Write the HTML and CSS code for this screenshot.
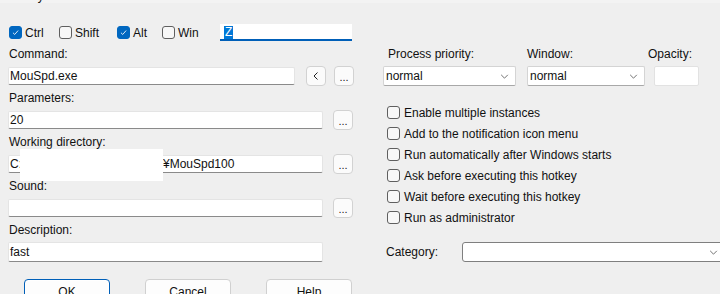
FILE: index.html
```html
<!DOCTYPE html>
<html lang="en">
<head>
    <meta charset="UTF-8">
    <meta name="viewport" content="width=device-width, initial-scale=1.0">
    <title>Hot Key</title>
    <link rel="stylesheet" href="styles.css">
</head>
<body>
    <div class="titlebar">Hot Key</div>

    <div class="dialog">
        <div class="left">
            <div class="hotkey-row">
                <label class="check"><span class="box checked"><svg viewBox="0 0 13 13"><polyline points="3.5,6.8 5.6,8.8 9.6,4.2"/></svg></span>Ctrl</label>
                <label class="check"><span class="box"></span>Shift</label>
                <label class="check"><span class="box checked"><svg viewBox="0 0 13 13"><polyline points="3.5,6.8 5.6,8.8 9.6,4.2"/></svg></span>Alt</label>
                <label class="check"><span class="box"></span>Win</label>
                <div class="hotkey-input"><span class="selected">Z</span></div>
            </div>

            <div class="field">
                <div class="label">Command:</div>
                <div class="input-row">
                    <div class="textbox short">MouSpd.exe</div>
                    <button class="btn-small">
                        <svg viewBox="0 0 10 10"><polyline points="6.5,1.5 3,5 6.5,8.5"/></svg>
                    </button>
                    <button class="btn-small dots">...</button>
                </div>
            </div>

            <div class="field">
                <div class="label">Parameters:</div>
                <div class="input-row">
                    <div class="textbox">20</div>
                    <button class="btn-small dots">...</button>
                </div>
            </div>

            <div class="field">
                <div class="label">Working directory:</div>
                <div class="input-row redacted-row">
                    <div class="textbox">C:<span class="gap-text"></span>¥MouSpd100</div>
                    <button class="btn-small dots">...</button>
                    <div class="redaction"></div>
                </div>
            </div>

            <div class="field">
                <div class="label">Sound:</div>
                <div class="input-row">
                    <div class="textbox"></div>
                    <button class="btn-small dots">...</button>
                </div>
            </div>

            <div class="field">
                <div class="label">Description:</div>
                <div class="input-row">
                    <div class="textbox tall">fast</div>
                </div>
            </div>

            <div class="buttons">
                <button class="btn default">OK</button>
                <button class="btn">Cancel</button>
                <button class="btn">Help</button>
            </div>
        </div>

        <div class="right">
            <div class="combo-labels">
                <span class="lbl-priority">Process priority:</span>
                <span class="lbl-window">Window:</span>
                <span class="lbl-opacity">Opacity:</span>
            </div>
            <div class="combo-row">
                <div class="combo priority">normal<svg viewBox="0 0 10 6"><polyline points="1,1 5,5 9,1"/></svg></div>
                <div class="combo window">normal<svg viewBox="0 0 10 6"><polyline points="1,1 5,5 9,1"/></svg></div>
                <div class="opacity-box"></div>
            </div>

            <div class="options">
                <label class="check option"><span class="box"></span>Enable multiple instances</label>
                <label class="check option"><span class="box"></span>Add to the notification icon menu</label>
                <label class="check option"><span class="box"></span>Run automatically after Windows starts</label>
                <label class="check option"><span class="box"></span>Ask before executing this hotkey</label>
                <label class="check option"><span class="box"></span>Wait before executing this hotkey</label>
                <label class="check option"><span class="box"></span>Run as administrator</label>
            </div>

            <div class="category-row">
                <span class="category-label">Category:</span>
                <div class="combo category"><svg viewBox="0 0 10 6"><polyline points="1,1 5,5 9,1"/></svg></div>
            </div>
        </div>
    </div>
</body>
</html>
```

FILE: styles.css
```css
* {
    margin: 0;
    padding: 0;
    box-sizing: border-box;
}

body {
    font-family: 'Liberation Sans', Arial, sans-serif;
    font-size: 12px;
    color: #111;
    background: #efefef;
    overflow: hidden;
    width: 720px;
    height: 294px;
}

.titlebar {
    height: 13px;
    line-height: 13px;
    margin-top: -10px;
    padding-left: 1px;
    overflow: hidden;
    background: #f3f3f3;
}

.dialog {
    display: flex;
    padding: 21px 0 0 8px;
}

/* left column */
.left {
    width: 345px;
    flex-shrink: 0;
}

.hotkey-row {
    display: grid;
    grid-template-columns: 50px 58px 45px 59px 132px;
    height: 17px;
    align-items: center;
    margin-bottom: 5px;
}

.check {
    display: flex;
    align-items: center;
    gap: 3px;
    white-space: nowrap;
}

.hotkey-row .check {
    padding-left: 1px;
}

.box {
    width: 13px;
    height: 13px;
    border: 1px solid #5f5f5f;
    border-radius: 3px;
    background: #f7f7f7;
    flex-shrink: 0;
    display: flex;
}

.box.checked {
    background: #0067c0;
    border-color: #0067c0;
}

.box svg {
    width: 11px;
    height: 11px;
    fill: none;
    stroke: #fff;
    stroke-width: 1;
}

.hotkey-input {
    height: 17px;
    background: #fff;
    border-bottom: 2px solid #005fb8;
    padding: 1px 0 0 4px;
}

.selected {
    display: inline-block;
    background: #0078d7;
    color: #fff;
    height: 13px;
    line-height: 13px;
    padding: 0 1px;
}

.field {
    margin-bottom: 4px;
}

.label {
    height: 16px;
    line-height: 16px;
    margin-bottom: 4px;
    padding-left: 1px;
}

.input-row {
    display: flex;
    align-items: center;
    height: 20px;
}

.redacted-row {
    position: relative;
}

.textbox {
    width: 315px;
    height: 18px;
    line-height: 17px;
    background: #fff;
    border: 1px solid #e4e4e4;
    border-bottom-color: #8a8a8a;
    border-radius: 2px;
    padding-left: 1px;
    white-space: nowrap;
    overflow: hidden;
    margin-right: 10px;
    flex-shrink: 0;
}

.textbox.short {
    width: 287px;
    margin-right: 11px;
}

.textbox.tall {
    height: 20px;
    line-height: 19px;
}

.gap-text {
    display: inline-block;
    width: 141px;
}

.redaction {
    position: absolute;
    left: 12px;
    top: -5px;
    width: 143px;
    height: 32px;
    background: #fff;
}

.btn-small {
    width: 20px;
    height: 20px;
    border: 1px solid #d2d2d2;
    border-radius: 4px;
    background: #fbfbfb;
    font-family: inherit;
    font-size: 11px;
    color: #222;
    display: flex;
    align-items: center;
    justify-content: center;
    margin-right: 8px;
    flex-shrink: 0;
}

.btn-small.dots {
    align-items: flex-end;
    padding-bottom: 4px;
    line-height: 8px;
    margin-right: 0;
}

.btn-small svg {
    width: 10px;
    height: 10px;
    fill: none;
    stroke: #222;
    stroke-width: 1;
}

.buttons {
    display: flex;
    gap: 35px;
    margin-top: 17px;
    padding-left: 16px;
}

.btn {
    width: 86px;
    height: 23px;
    border: 1px solid #d0d0d0;
    border-radius: 4px;
    background: #fdfdfd;
    font-family: inherit;
    font-size: 12px;
    color: #111;
    padding-top: 2px;
}

.btn.default {
    border: 1px solid #005fb8;
    box-shadow: inset 0 0 0 1px #fff;
}

/* right column */
.right {
    margin-left: 30px;
    flex: 1;
    min-width: 0;
}

.combo-labels {
    display: flex;
    height: 16px;
    line-height: 16px;
    margin-top: 22px;
    margin-bottom: 4px;
}

.lbl-priority {
    width: 144px;
    padding-left: 5px;
}

.lbl-window {
    width: 121px;
}

.combo-row {
    display: flex;
    align-items: center;
    height: 20px;
}

.combo {
    height: 20px;
    line-height: 19px;
    background: #fff;
    border: 1px solid #d4d4d4;
    border-bottom-color: #a8a8a8;
    border-radius: 2px;
    padding-left: 2px;
    display: flex;
    align-items: center;
    justify-content: space-between;
}

.combo svg {
    width: 9px;
    height: 5px;
    margin-right: 6px;
    fill: none;
    stroke: #555;
    stroke-width: 1;
}

.combo.priority {
    width: 133px;
    margin-right: 11px;
}

.combo.window {
    width: 118px;
    margin-right: 9px;
}

.opacity-box {
    width: 45px;
    height: 20px;
    background: #fff;
    border: 1px solid #e2e2e2;
    border-radius: 2px;
}

.options {
    margin-top: 16px;
    padding-left: 4px;
}

.option {
    height: 21px;
    gap: 4px;
}

.category-row {
    display: flex;
    align-items: center;
    height: 20px;
    margin-top: 14px;
}

.category-label {
    width: 79px;
    padding-left: 3px;
}

.combo.category {
    flex: 1;
    margin-right: -3px;
    border: 1px solid #7f7f7f;
    border-radius: 3px;
    justify-content: flex-end;
}

.combo.category svg {
    margin-right: 4px;
}
```
